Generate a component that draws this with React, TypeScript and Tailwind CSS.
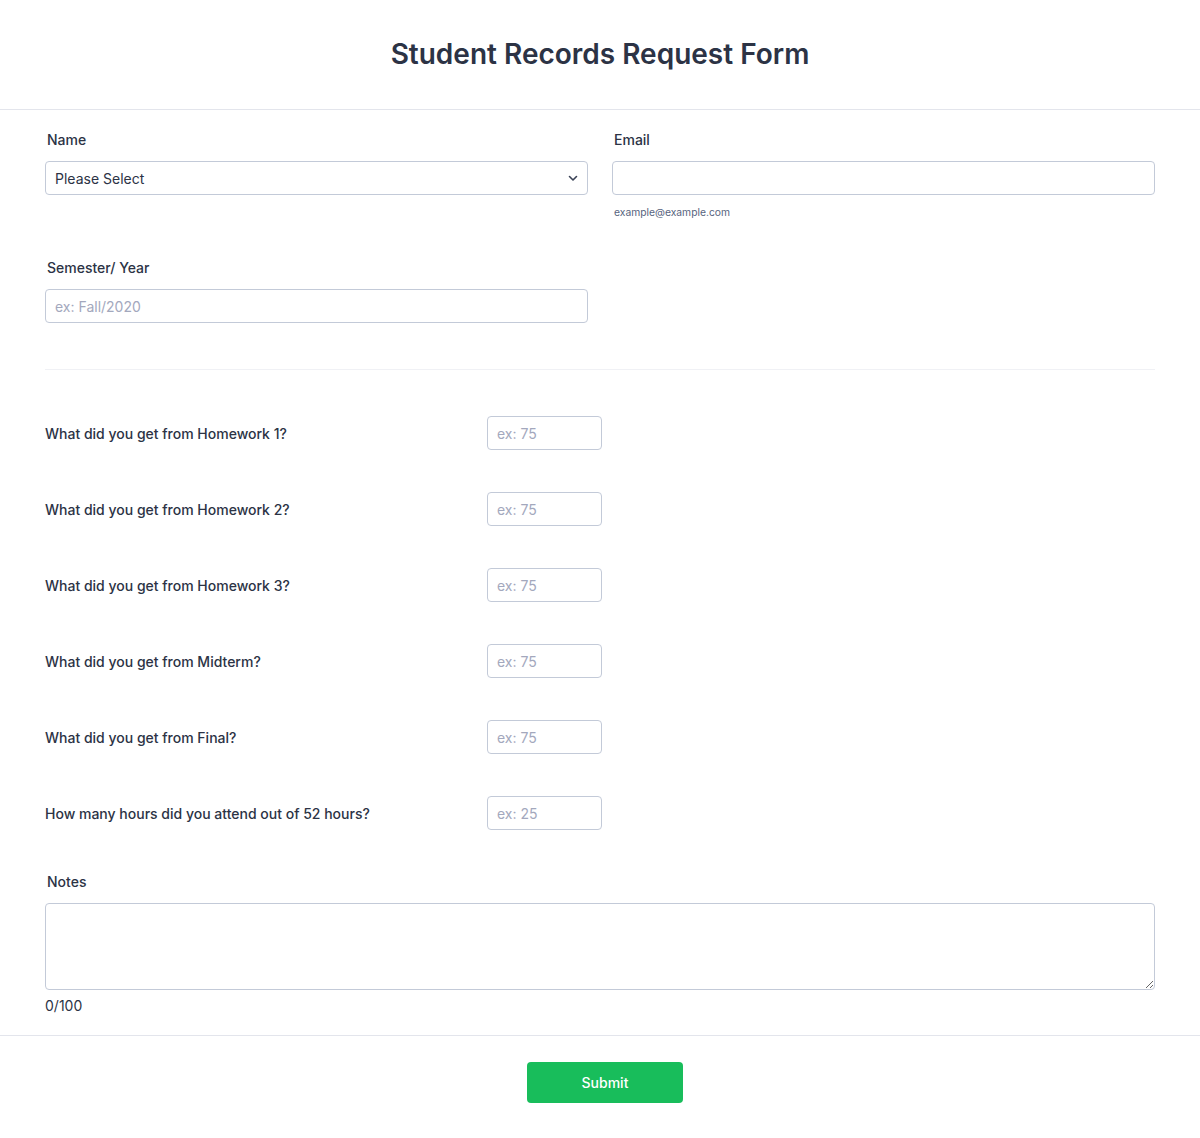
import React from "react";

const rows = [
  { label: "What did you get from Homework 1?", ph: "ex: 75" },
  { label: "What did you get from Homework 2?", ph: "ex: 75" },
  { label: "What did you get from Homework 3?", ph: "ex: 75" },
  { label: "What did you get from Midterm?", ph: "ex: 75" },
  { label: "What did you get from Final?", ph: "ex: 75" },
  { label: "How many hours did you attend out of 52 hours?", ph: "ex: 25" },
];

export default function App() {
  return (
    <div
      className="w-[1200px] min-h-[1138px] bg-white text-[#2c3345]"
      style={{ fontFamily: "Inter, 'Noto Sans', sans-serif" }}
    >
      <header className="h-[110px] border-b border-[#e3e5ec] flex items-center justify-center">
        <h1 className="text-[28px] font-semibold leading-[36px] text-[#2c3345] -mt-[2px]">
          Student Records Request Form
        </h1>
      </header>

      <main className="px-[45px]">
        <div className="grid grid-cols-2 gap-x-[24px] pt-[20px]">
          <div>
            <label className="block pl-[2px] text-[14px] leading-[20px] font-medium mb-[11px]">Name</label>
            <div className="relative h-[34px] border border-[#c3cad8] rounded-[4px] flex items-center px-[9px] text-[14px] text-[#2c3345]">
              Please Select
              <svg className="absolute right-[9px] top-[13px]" width="10" height="7" viewBox="0 0 10 7" fill="none">
                <path d="M1.5 1.5L5 5L8.5 1.5" stroke="#3a4256" strokeWidth="1.6" strokeLinecap="round" strokeLinejoin="round" />
              </svg>
            </div>
          </div>
          <div>
            <label className="block pl-[2px] text-[14px] leading-[20px] font-medium mb-[11px]">Email</label>
            <input
              className="block w-full h-[34px] border border-[#c3cad8] rounded-[4px] px-[9px] text-[14px] outline-none"
              type="text"
            />
            <div className="pl-[2px] mt-[10px] text-[10.3px] leading-[14px] text-[#57647e]">example@example.com</div>
          </div>
        </div>

        <div className="w-[543px] mt-[39px]">
          <label className="block pl-[2px] text-[14px] leading-[20px] font-medium mb-[11px]">Semester/ Year</label>
          <input
            className="block w-full h-[34px] border border-[#c3cad8] rounded-[4px] px-[9px] text-[14px] outline-none placeholder:text-[#a3a8bd]"
            placeholder="ex: Fall/2020"
          />
        </div>

        <div className="mt-[46px] border-t border-[#f0f1f5]" />

        <div className="flex flex-col gap-[42px] mt-[46px]">
          {rows.map((r) => (
            <div key={r.label} className="flex items-center">
              <div className="w-[442px] text-[14px] leading-[20px] font-medium pt-[1px]">{r.label}</div>
              <input
                className="block w-[115px] h-[34px] border border-[#c3cad8] rounded-[4px] px-[9px] text-[14px] outline-none placeholder:text-[#a3a8bd]"
                placeholder={r.ph}
              />
            </div>
          ))}
        </div>

        <div className="mt-[42px]">
          <label className="block pl-[2px] text-[14px] leading-[20px] font-medium mb-[11px]">Notes</label>
          <textarea className="block w-full h-[87px] border border-[#c3cad8] rounded-[4px] px-[9px] py-[6px] text-[14px] outline-none" />
          <div className="mt-[6px] text-[14px] leading-[20px]">0/100</div>
        </div>
      </main>

      <div className="mt-[19px] border-t border-[#e3e5ec]" />

      <div className="flex justify-center pt-[26px] pl-[10px]">
        <button className="w-[156px] h-[41px] rounded-[4px] bg-[#18bd5b] text-white text-[14px] font-medium">
          Submit
        </button>
      </div>
    </div>
  );
}
